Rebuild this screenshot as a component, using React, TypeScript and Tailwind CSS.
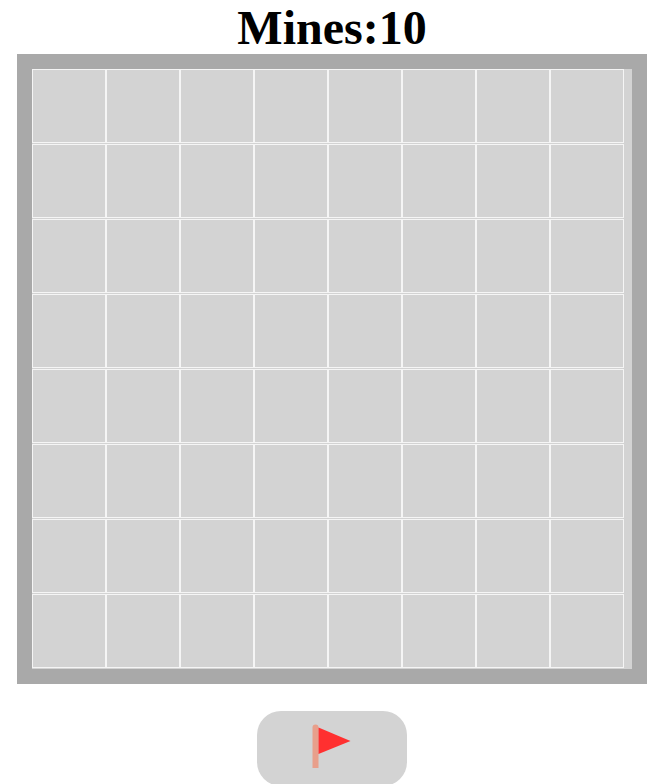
const ROWS = Array.from({ length: 8 }, (_, i) => i);
const COLS = Array.from({ length: 8 }, (_, i) => i);

function FlagIcon() {
  return (
    <svg width="40" height="46" viewBox="0 0 40 46" aria-hidden>
      <path d="M0.5 3.5a3 3 0 0 1 6 0V44H0.5Z" fill="#e89f8b" />
      <path d="M6.5 3.5L38.5 17L6.5 30Z" fill="#ff3030" />
    </svg>
  );
}

export default function App() {
  return (
    <div className="h-[784px] w-[672px] overflow-clip">
      <div className="flex w-[664px] flex-col items-center">
        <h1 className="h-[54px] text-[48px] leading-[55px] font-bold text-black [font-family:'Liberation_Serif',serif]">
          Mines:10
        </h1>

        {/* Board */}
        <div className="h-[630px] w-[630px] border-[15px] border-[#a9a9a9] bg-[#d3d3d3]">
          {ROWS.map((r) => (
            <div key={r} className="flex h-[75px]">
              {COLS.map((c) => (
                <div key={c} className="h-[74px] w-[74px] border border-[#f5f5f5] bg-[#d3d3d3]" />
              ))}
            </div>
          ))}
        </div>

        <button className="mt-[27px] flex h-[75px] w-[150px] shrink-0 items-start justify-center rounded-[24px] bg-[#d3d3d3] pt-[13px]">
          <FlagIcon />
        </button>
      </div>
    </div>
  );
}
